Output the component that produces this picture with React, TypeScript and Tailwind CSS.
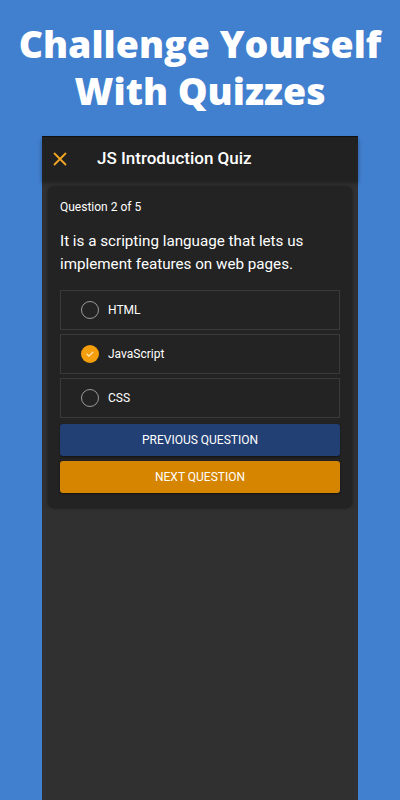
import React from "react";

const options = [
  { label: "HTML", checked: false },
  { label: "JavaScript", checked: true },
  { label: "CSS", checked: false },
];

function Radio({ checked }: { checked: boolean }) {
  if (checked) {
    return (
      <span className="flex h-[18px] w-[18px] items-center justify-center rounded-full bg-[#f59e0b]">
        <svg width="10" height="10" viewBox="0 0 24 24" fill="none" stroke="#fde7c2" strokeWidth="3" strokeLinecap="round" strokeLinejoin="round">
          <path d="M5 12.5l4.5 4.5L19 7.5" />
        </svg>
      </span>
    );
  }
  return <span className="h-[18px] w-[18px] rounded-full border-[1.5px] border-[#9a9a9a]" />;
}

export default function App() {
  return (
    <div className="flex h-[800px] w-[400px] flex-col items-center overflow-hidden bg-[#417fcf] font-['Roboto',sans-serif]">
      <h1 className="mt-[20px] text-center font-['Open_Sans',sans-serif] text-[37.5px] font-extrabold leading-[47px] text-white">
        Challenge Yourself
        <br />
        With Quizzes
      </h1>

      <div className="mt-[22px] flex w-[316px] flex-1 flex-col border-t border-[#111] bg-[#303030]">
        {/* App bar */}
        <header className="flex h-[44px] items-center bg-[#212121] shadow-[0_2px_4px_rgba(0,0,0,0.35)]">
          <svg className="ml-[11px]" width="14" height="14" viewBox="0 0 14 14" stroke="#f5a623" strokeWidth="1.8" strokeLinecap="round">
            <path d="M1.5 1.5l11 11M12.5 1.5l-11 11" />
          </svg>
          <span className="ml-[30px] text-[17px] font-medium text-white">JS Introduction Quiz</span>
        </header>

        {/* Card */}
        <section className="mx-[6px] mt-[5px] rounded-[6px] bg-[#232323] px-[12px] pb-[14px] pt-[13px] shadow-[0_1px_3px_rgba(0,0,0,0.5)]">
          <div className="text-[12px] leading-[16px] text-white">Question 2 of 5</div>
          <p className="mt-[15px] text-[15.2px] leading-[23px] text-white">
            It is a scripting language that lets us implement features on web pages.
          </p>

          <div className="mt-[14px] flex flex-col gap-[4px]">
            {options.map((o) => (
              <div
                key={o.label}
                className="flex h-[40px] items-center border border-[#3a3a3a] pl-[20px]"
              >
                <Radio checked={o.checked} />
                <span className="ml-[9px] text-[12px] text-white">{o.label}</span>
              </div>
            ))}
          </div>

          <button className="mt-[6px] flex h-[32px] w-full items-center justify-center rounded-[3px] bg-[#224074] text-[12px] uppercase text-white shadow-[0_1px_2px_rgba(0,0,0,0.5)]">
            Previous Question
          </button>
          <button className="mt-[5px] flex h-[32px] w-full items-center justify-center rounded-[3px] bg-[#d68500] text-[12px] uppercase text-white shadow-[0_1px_2px_rgba(0,0,0,0.5)]">
            Next Question
          </button>
        </section>
      </div>
    </div>
  );
}
